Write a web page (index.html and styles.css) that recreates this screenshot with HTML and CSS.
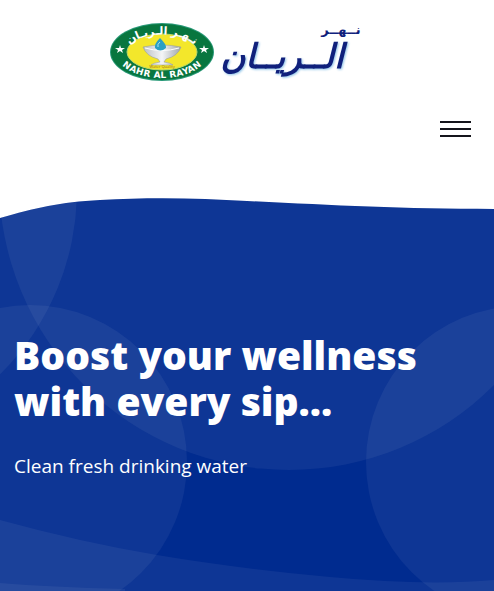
FILE: index.html
```
<!DOCTYPE html>
<html lang="en">
<head>
<meta charset="utf-8">
<meta name="viewport" content="width=device-width, initial-scale=1">
<title>Nahr Al Rayan</title>
<link rel="stylesheet" href="styles.css">
</head>
<body>
<header class="header">
  <a class="brand" href="#" aria-label="Nahr Al Rayan">
    <svg class="logo" viewBox="0 0 274 64" role="img" aria-label="Nahr Al Rayan">
      <defs>
        <path id="arc-top" d="M14 37 C15 7 89 7 90 37"/>
        <path id="arc-bottom" d="M9 32 A43 23 0 0 0 95 32"/>
        <linearGradient id="silver" x1="0" x2="1">
          <stop offset="0" stop-color="#b9bec4"/>
          <stop offset=".5" stop-color="#f4f5f6"/>
          <stop offset="1" stop-color="#9fa5ab"/>
        </linearGradient>
      </defs>
      <ellipse cx="52" cy="32" rx="52" ry="29" fill="#2a9a79"/>
      <ellipse cx="52" cy="32" rx="51" ry="28" fill="#08763f"/>
      <ellipse cx="52" cy="32" rx="35" ry="18" fill="#f3e72b" stroke="#b8d66b"/>
      <path d="M33 27 Q52 23 71 27 Q68 36 56 39 L54 42 Q61 43 63 45 H41 Q43 43 50 42 L48 39 Q36 36 33 27Z" fill="url(#silver)" stroke="#8f969c" stroke-width=".5"/>
      <path d="M35 28 Q52 33 69 28" fill="none" stroke="#fff"/>
      <path d="M50 18 Q57 25 56 28 Q50 33 45 28 Q44 24 50 18Z" fill="#2b9fc4"/>
      <path d="M48 27 Q47 24 50 22" fill="none" stroke="#a6e2f0"/>
      <path d="M10 25l1 3h4l-3 2 1 3-3-2-3 2 1-3-3-2h4zM94 25l1 3h4l-3 2 1 3-3-2-3 2 1-3-3-2h4z" fill="#fff"/>
      <text class="logo-latin"><textPath href="#arc-bottom" startOffset="50%">NAHR AL RAYAN</textPath></text>
      <text class="logo-arabic"><textPath href="#arc-top" startOffset="50%">نـهـر الـريـان</textPath></text>
      <text class="logo-motto" x="52" y="48">Water Quality</text>
      <text class="logo-small" x="231" y="14">نــهــر</text>
      <text class="logo-word" x="172" y="48">الــريــان</text>
    </svg>
  </a>
  <button class="menu" type="button" aria-label="Open menu">
    <span></span><span></span><span></span>
  </button>
</header>
<main class="hero">
  <svg class="hero-art" viewBox="0 190 494 401" preserveAspectRatio="xMidYMin slice" aria-hidden="true">
    <defs>
      <clipPath id="wave"><path d="M0 218 C35 208 60 202 100 200 C150 197 200 198 247 201 C330 205 400 209 494 209 V591 H0Z"/></clipPath>
    </defs>
    <g clip-path="url(#wave)">
      <rect y="190" width="494" height="401" fill="#002b8f"/>
      <g fill="#fff" fill-opacity=".055">
        <circle cx="289" cy="180" r="290"/>
        <circle cx="-182" cy="190" r="259"/>
        <circle cx="30" cy="462" r="157"/>
        <circle cx="522" cy="462" r="156"/>
        <path d="M0 520 Q80 542 157 555 T330 577 T494 580 V591 H0Z"/>
        <path d="M0 583 Q50 587 125 589 V591 H0Z"/>
      </g>
    </g>
  </svg>
  <div class="hero-text">
    <h1>Boost your wellness with every sip...</h1>
    <p>Clean fresh drinking water</p>
  </div>
</main>
</body>
</html>
```
FILE: styles.css
```
* { box-sizing: border-box; }

body {
  margin: 0;
  min-height: 100vh;
  display: flex;
  flex-direction: column;
  background: #fff;
  font-family: "Open Sans", "Noto Sans", sans-serif;
}

.header {
  display: flex;
  flex-direction: column;
  gap: 32px;
  padding: 20px 20px 48px;
}

.brand { align-self: center; }

.logo {
  display: block;
  width: 274px;
  height: 64px;
}

.logo text { text-anchor: middle; }

.logo-latin {
  font: bold 9px "DejaVu Sans", sans-serif;
  fill: #fff;
  dominant-baseline: central;
}

.logo-arabic {
  font: bold 11px "DejaVu Sans", sans-serif;
  fill: #fff;
}

.logo-motto {
  font: 4px "Open Sans", sans-serif;
  fill: #a06a1c;
}

.logo-small,
.logo-word {
  fill: #10207c;
  font-family: "DejaVu Sans", sans-serif;
  font-weight: bold;
}

.logo-small { font-size: 13px; }

.logo-word {
  font-size: 34px;
  font-style: italic;
  filter: drop-shadow(1px 1px 1px #8fc4e8);
}

.menu {
  align-self: flex-end;
  display: flex;
  flex-direction: column;
  gap: 5px;
  width: 37px;
  padding: 5px 3px;
  border: 0;
  background: none;
  cursor: pointer;
}

.menu span {
  height: 2px;
  background: #15151c;
}

.hero {
  position: relative;
  flex: 1;
  overflow: hidden;
}

.hero-art {
  position: absolute;
  inset: 0;
  width: 100%;
  height: 100%;
}

.hero-text {
  position: relative;
  padding: 142px 14px 104px;
  color: #fff;
}

h1 {
  margin: 0 0 28px;
  max-width: 440px;
  font: 800 39px/46px "Open Sans", sans-serif;
}

p {
  margin: 0;
  font-size: 19px;
  line-height: 28px;
}
```
